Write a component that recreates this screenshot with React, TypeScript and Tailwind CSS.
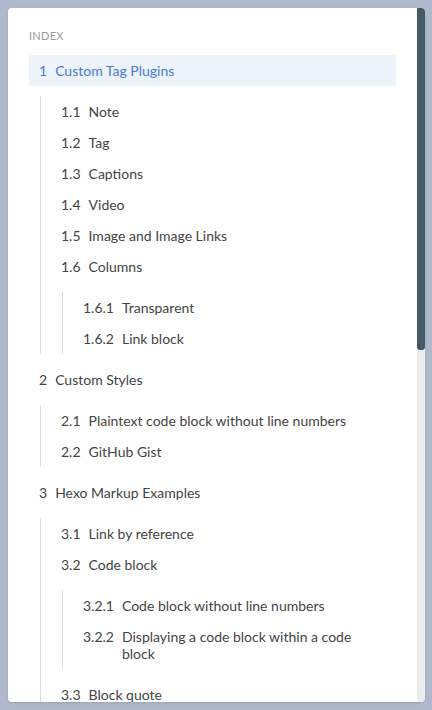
type Item = { num: string; title: string; active?: boolean; children?: Item[] };

const toc: Item[] = [
  {
    num: "1",
    title: "Custom Tag Plugins",
    active: true,
    children: [
      { num: "1.1", title: "Note" },
      { num: "1.2", title: "Tag" },
      { num: "1.3", title: "Captions" },
      { num: "1.4", title: "Video" },
      { num: "1.5", title: "Image and Image Links" },
      {
        num: "1.6",
        title: "Columns",
        children: [
          { num: "1.6.1", title: "Transparent" },
          { num: "1.6.2", title: "Link block" },
        ],
      },
    ],
  },
  {
    num: "2",
    title: "Custom Styles",
    children: [
      { num: "2.1", title: "Plaintext code block without line numbers" },
      { num: "2.2", title: "GitHub Gist" },
    ],
  },
  {
    num: "3",
    title: "Hexo Markup Examples",
    children: [
      { num: "3.1", title: "Link by reference" },
      {
        num: "3.2",
        title: "Code block",
        children: [
          { num: "3.2.1", title: "Code block without line numbers" },
          { num: "3.2.2", title: "Displaying a code block within a code block" },
        ],
      },
      { num: "3.3", title: "Block quote" },
    ],
  },
];

function TocList({ items, nested }: { items: Item[]; nested?: boolean }) {
  return (
    <ul className={nested ? "my-[10px] ml-[11px] border-l border-[#dcdcdc] pl-[10px]" : ""}>
      {items.map((it) => (
        <li key={it.num}>
          <a
            className={
              "flex rounded-[2px] px-[10px] py-[7px] text-[14px] leading-[17px] " +
              (it.active ? "bg-[#edf2fb] text-[#4a7ad6]" : "text-[#444]")
            }
          >
            <span className="mr-[8px] shrink-0">{it.num}</span>
            <span>{it.title}</span>
          </a>
          {it.children && <TocList items={it.children} nested />}
        </li>
      ))}
    </ul>
  );
}

export default function App() {
  return (
    <div className="h-[710px] w-[432px] bg-[#b0b8cc] p-2 pr-[7px]" style={{ fontFamily: "Lato, 'Noto Sans', sans-serif" }}>
      <div className="flex h-[694px] overflow-hidden rounded-[4px] bg-white shadow-sm">
        <div className="flex-1 overflow-hidden px-[21px] pt-[20px]">
          <div className="mb-[11px] text-[11px] leading-[16px] tracking-wide text-[#9a9a9a]">INDEX</div>
          <TocList items={toc} />
        </div>
        <div className="flex w-2 flex-col">
          <div className="h-[342px] rounded-b-[3px] bg-[#455a64]" />
          <div className="flex-1 rounded-b-[3px] bg-[#ececec]" />
        </div>
      </div>
    </div>
  );
}
